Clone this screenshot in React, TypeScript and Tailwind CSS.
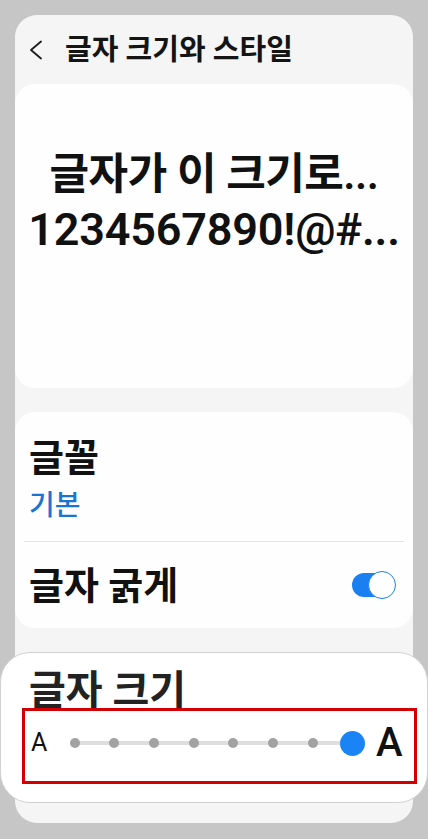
const font = '[font-family:Roboto,"Noto_Sans_CJK_KR",sans-serif]';

const steps = [0, 1, 2, 3, 4, 5, 6, 7];

function Toggle() {
  return (
    <div className="relative w-[44px] h-[28px] flex items-center">
      <div className="w-[42px] h-[24px] rounded-full bg-[#1a80f2]" />
      <div className="absolute right-0 top-0 w-[28px] h-[28px] rounded-full bg-white border-[1.5px] border-[#1a80f2]" />
    </div>
  );
}

function SizeSlider() {
  return (
    <div className="relative grid grid-cols-8 w-[317px] h-[26px] items-center">
      <div className="absolute left-[20px] right-[20px] top-1/2 -translate-y-1/2 h-[4px] bg-[#dedede] rounded-full" />
      {steps.map((s) => (
        <div key={s} className="relative flex justify-center items-center">
          {s === 7 ? (
            <div className="w-[25px] h-[25px] rounded-full bg-[#1a84f7]" />
          ) : (
            <div className="w-[10px] h-[10px] rounded-full bg-[#a2a2a2]" />
          )}
        </div>
      ))}
    </div>
  );
}

export default function App() {
  return (
    <div className={`h-[839px] bg-[#c6c6c6] px-[15px] pt-[15px] overflow-hidden ${font}`}>
      <div className="h-[808px] rounded-[22px] bg-[#f5f5f5] flex flex-col">
        {/* header */}
        <div className="h-[69px] flex items-center pl-[14px] pt-[1px]">
          <svg width="14" height="20" viewBox="0 0 14 20" fill="none" className="text-[#1c1c1c]">
            <path d="M12 1.5 L2 10 L12 18.5" stroke="currentColor" strokeWidth="1.8" strokeLinecap="round" strokeLinejoin="round" />
          </svg>
          <h1 className="ml-[22px] text-[29px] leading-[36px] font-bold text-[#141414]">글자 크기와 스타일</h1>
        </div>

        {/* preview */}
        <div className="h-[304px] rounded-[20px] bg-[#fefefe] flex flex-col items-center pt-[62px]">
          <p className="text-[43px] leading-[56px] font-semibold text-[#111] tracking-[-0.5px]">글자가 이 크기로...</p>
          <p className="text-[45px] leading-[56px] font-semibold text-[#111] tracking-[-0.2px]">1234567890!@#...</p>
        </div>

        {/* settings */}
        <div className="mt-[24px] h-[216px] rounded-[20px] bg-[#fefefe] flex flex-col">
          <div className="h-[129px] flex flex-col justify-center pl-[14px] pt-[4px]">
            <span className="text-[38px] leading-[46px] font-bold text-[#111]">글꼴</span>
            <span className="text-[28px] leading-[34px] font-medium text-[#1a74d2] mt-[8px]">기본</span>
          </div>
          <div className="mx-[9px] h-px bg-[#e3e3e3]" />
          <div className="flex-1 flex items-center justify-between pl-[14px] pr-[17px]">
            <span className="text-[38px] leading-[46px] font-bold text-[#111] translate-y-[1px]">글자 굵게</span>
            <Toggle />
          </div>
        </div>

        {/* text size popup */}
        <div className="mt-[24px] -mx-[15px] h-[151px] rounded-[30px] border border-[#d2d2d2] bg-white flex flex-col">
          <div className="h-[55px] flex items-end pl-[28px]">
            <span className="text-[40px] leading-[44px] font-bold text-[#222] translate-y-[5px]">글자 크기</span>
          </div>
          <div className="relative ml-[21px] mr-[10px] h-[76px] border-[3px] border-[#d40000] flex items-center pb-[6px]">
            <span className="ml-[6px] text-[25px] text-[#111] w-[24px]">A</span>
            <SizeSlider />
            <span className="ml-[4px] text-[40px] font-medium text-[#111] leading-none">A</span>
          </div>
        </div>
      </div>
    </div>
  );
}
